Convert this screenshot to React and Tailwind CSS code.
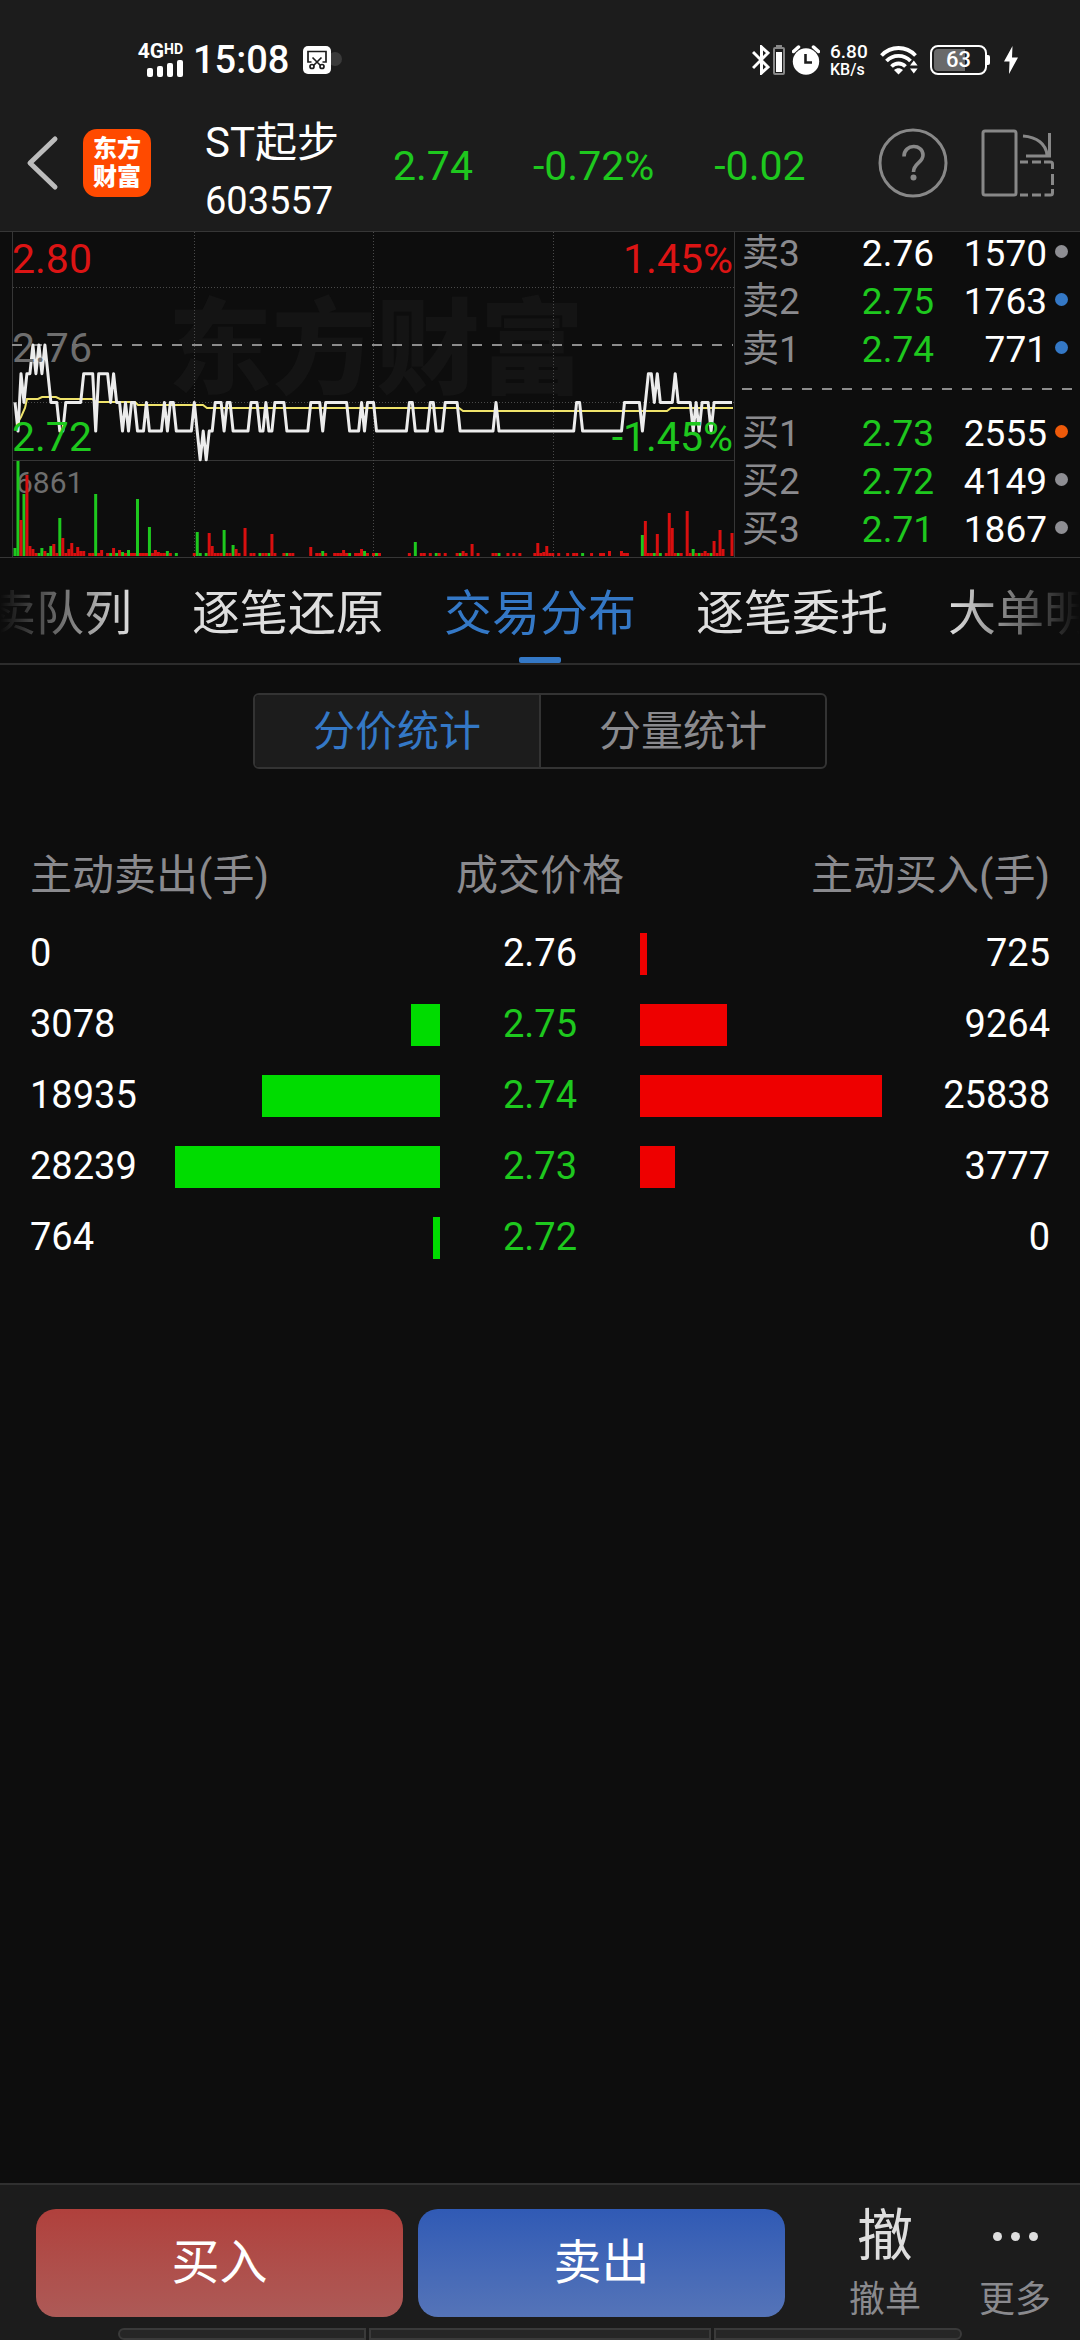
import { useState } from "react";

// [price in cents over 2.70, minutes it held]
const PRICE_RUNS = [
  [4, 1], [3, 1], [5, 1], [4, 1], [5, 2], [6, 1], [5, 1], [6, 1], [5, 1], [6, 1], [5, 1],
  [4, 3], [3, 2], [4, 6], [5, 4], [3, 1], [5, 4], [4, 1], [5, 1], [4, 2], [3, 1], [4, 1],
  [3, 1], [4, 2], [3, 3], [4, 1], [3, 5], [4, 1], [3, 1], [4, 2], [3, 6], [4, 1], [3, 1],
  [2, 1], [3, 1], [2, 1], [3, 2], [4, 3], [3, 1], [4, 2], [3, 6], [4, 3], [3, 2], [4, 1],
  [3, 2], [4, 4], [3, 8], [4, 4], [3, 1], [4, 8], [3, 4], [4, 1], [3, 1], [4, 3], [3, 11],
  [4, 2], [3, 5], [4, 2], [3, 3], [4, 5], [3, 12], [4, 1], [3, 26], [4, 2], [3, 14], [4, 6],
  [3, 1], [4, 1], [5, 2], [4, 1], [5, 1], [4, 5], [5, 1], [4, 5], [3, 1], [4, 1], [3, 1],
  [4, 3], [3, 1], [4, 7],
];

// [minute, bar height]
const VOLUME_UP = [
  [2, 36], [4, 81], [5, 10], [6, 7], [7, 3], [10, 5], [13, 12], [14, 3], [16, 18], [17, 3],
  [18, 7], [19, 13], [20, 3], [21, 9], [22, 5], [23, 5], [25, 3], [26, 3], [28, 3], [29, 6],
  [31, 3], [33, 8], [35, 6], [37, 3], [39, 3], [40, 3], [42, 3], [43, 3], [44, 3], [46, 3],
  [47, 6], [48, 4], [49, 3], [50, 3], [52, 3], [60, 3], [65, 23], [66, 10], [67, 3], [68, 3],
  [69, 3], [71, 3], [72, 3], [74, 7], [75, 3], [77, 28], [79, 3], [80, 3], [83, 3], [84, 3],
  [86, 22], [87, 3], [90, 3], [92, 3], [93, 3], [99, 9], [101, 3], [102, 3], [104, 3],
  [107, 3], [108, 3], [109, 3], [110, 6], [111, 3], [114, 3], [115, 3], [116, 7], [118, 3],
  [120, 3], [122, 3], [132, 3], [136, 3], [137, 3], [139, 3], [142, 3], [144, 3], [148, 3],
  [150, 5], [151, 3], [153, 12], [155, 3], [160, 3], [161, 3], [165, 3], [167, 3], [169, 3],
  [174, 3], [175, 13], [176, 3], [177, 4], [178, 10], [179, 3], [180, 3], [182, 3], [185, 3],
  [187, 3], [188, 3], [193, 3], [196, 3], [197, 3], [199, 5], [203, 5], [204, 3], [205, 3],
  [211, 35], [212, 3], [213, 3], [215, 22], [218, 3], [219, 43], [220, 28], [221, 3],
  [223, 3], [225, 45], [226, 3], [228, 3], [230, 3], [231, 5], [232, 3], [234, 15], [235, 3],
  [236, 26], [237, 7], [240, 23],
];
const VOLUME_DOWN = [
  [0, 8], [1, 95], [3, 62], [8, 3], [9, 8], [11, 3], [12, 10], [15, 38], [27, 62], [32, 3],
  [34, 3], [36, 4], [38, 6], [41, 57], [45, 29], [51, 5], [54, 3], [61, 24], [62, 3],
  [64, 3], [70, 26], [73, 11], [82, 3], [85, 3], [91, 3], [103, 5], [112, 3], [117, 5],
  [121, 3], [134, 14], [141, 3], [149, 3], [162, 3], [190, 3], [210, 21], [214, 3],
  [216, 3], [222, 3], [227, 7], [229, 3], [233, 3],
];

const minuteX = (i) => 15 + (i * 717) / 240;
const priceY = (cents) => 113 + (6 - cents) * 28.7;

const pricePoints = PRICE_RUNS.flatMap(([cents, n]) => Array(n).fill(cents))
  .map((cents, i) => `${minuteX(i).toFixed(1)},${priceY(cents).toFixed(1)}`)
  .join(" ");

const SELL_ORDERS = [
  { label: "卖3", price: "2.76", qty: 1570, color: "text-white", dot: "bg-[#8e8e93]" },
  { label: "卖2", price: "2.75", qty: 1763, color: "text-[#1ec81e]", dot: "bg-[#3478c6]" },
  { label: "卖1", price: "2.74", qty: 771, color: "text-[#1ec81e]", dot: "bg-[#3478c6]" },
];
const BUY_ORDERS = [
  { label: "买1", price: "2.73", qty: 2555, color: "text-[#1ec81e]", dot: "bg-[#ee5a0a]" },
  { label: "买2", price: "2.72", qty: 4149, color: "text-[#1ec81e]", dot: "bg-[#8e8e93]" },
  { label: "买3", price: "2.71", qty: 1867, color: "text-[#1ec81e]", dot: "bg-[#8e8e93]" },
];

const TABS = ["买卖队列", "逐笔还原", "交易分布", "逐笔委托", "大单明细"];

const ROWS = [
  { price: "2.76", sell: 0, buy: 725, flat: true },
  { price: "2.75", sell: 3078, buy: 9264 },
  { price: "2.74", sell: 18935, buy: 25838 },
  { price: "2.73", sell: 28239, buy: 3777 },
  { price: "2.72", sell: 764, buy: 0 },
];
const MAX_VOLUME = 28239;

function StatusBar() {
  return (
    <div className="flex h-[120px] items-center justify-between pl-[135px] pr-[62px] text-white">
      <div className="flex items-center">
        <div className="flex w-12 flex-col items-end">
          <div className="flex items-start font-bold">
            <span className="text-[21px] leading-[17px]">4G</span>
            <span className="text-[14px] leading-[12px]">HD</span>
          </div>
          <svg width="36" height="17" viewBox="0 0 36 17" fill="currentColor">
            <rect x="0" y="8" width="6" height="9" rx="2" />
            <rect x="10" y="6" width="6" height="11" rx="2" />
            <rect x="20" y="3" width="6" height="14" rx="2" />
            <rect x="30" y="0" width="6" height="17" rx="2" />
          </svg>
        </div>
        <span className="ml-2.5 text-[38px] font-medium leading-[40px]">15:08</span>
        <svg className="ml-3.5" width="40" height="28" viewBox="0 0 40 28" fill="none">
          <circle cx="32" cy="13" r="7" fill="#3a3a3a" />
          <rect width="28" height="28" rx="5" fill="#fff" />
          <g stroke="#1c1c1c" strokeWidth="1.7">
            <path d="M8.500 16H5V5.500h18V16h-3.500" />
            <path d="M9.500 11.500l8 8M18.500 11.500l-8 8" />
            <circle cx="9" cy="20.500" r="2" />
            <circle cx="19" cy="20.500" r="2" />
          </g>
        </svg>
      </div>

      <div className="flex items-center">
        <svg width="18" height="30" viewBox="0 0 18 30" fill="none" stroke="currentColor" strokeWidth="3">
          <path d="M1 7l15 15-6.500 6V2l6.500 6L1 23" />
        </svg>
        <svg className="ml-[3px]" width="12" height="30" viewBox="0 0 12 30" fill="none">
          <rect x="3" y="0" width="6" height="3" fill="#888" />
          <rect x="1" y="3" width="10" height="26" rx="1" stroke="#888" strokeWidth="2" />
          <rect x="3" y="7" width="6" height="20" fill="#fff" />
        </svg>
        <svg className="ml-[7px]" width="28" height="30" viewBox="0 0 28 30" fill="none">
          <circle cx="14" cy="16.500" r="13.200" fill="#fff" />
          <path d="M1.500 6.500L6.500 2M26.500 6.500L21.500 2" stroke="#fff" strokeWidth="3.500" strokeLinecap="round" />
          <path d="M13.500 9v8.500h6.500" stroke="#1c1c1c" strokeWidth="2.600" />
        </svg>
        <div className="ml-2.5 flex w-[38px] flex-col font-medium">
          <span className="text-[19px] leading-[18px]">6.80</span>
          <span className="text-[16px] leading-[17px]">KB/s</span>
        </div>
        <svg className="ml-3" width="38" height="30" viewBox="0 0 38 30" fill="none">
          <g stroke="#fff" strokeWidth="3.800">
            <path d="M1.500 10.500C11 0.500 26 0.500 35.500 10.500" />
            <path d="M6.500 16C13 9.200 24 9.200 30.500 16" />
            <path d="M11.500 21.500C15.500 17.500 21.500 17.500 25.500 21.500" />
          </g>
          <path d="M14 25c3-2.500 6-2.500 9 0l-4.500 4.500z" fill="#fff" />
          <path d="M30 20.500l3.800-5 3.800 5zM30 23.500l3.800 5 3.800-5z" fill="#fff" />
        </svg>
        <div className="ml-3 flex items-center">
          <div className="relative flex h-[30px] w-[57px] items-center justify-center rounded-[8px] border-2 border-white">
            <div className="absolute inset-y-0.5 left-0.5 w-[31px] rounded-l-[4px] bg-[#6a6a6a]" />
            <span className="relative text-[22px] font-medium leading-[26px]">63</span>
          </div>
          <div className="h-[10px] w-[3px] rounded-r-[2px] bg-white" />
        </div>
        <svg className="ml-3.5" width="14" height="28" viewBox="0 0 14 28" fill="currentColor">
          <path d="M8.500 0L0 15.500h5.500L5 28l9-16.500H8z" />
        </svg>
      </div>
    </div>
  );
}

function Header() {
  return (
    <div className="flex h-[111px] items-center pb-[25px] pl-[26px] pr-[25px]">
      <button aria-label="返回" className="text-[#bcbcbc]">
        <svg width="34" height="56" viewBox="0 0 34 56" fill="none" stroke="currentColor" strokeWidth="5" strokeLinecap="round" strokeLinejoin="round">
          <path d="M29 4L4 28l25 24" />
        </svg>
      </button>
      <div className="ml-[23px] flex h-[68px] w-[68px] flex-col items-center justify-center rounded-[14px] bg-[#ff4a00] text-[24px] font-black leading-[28px] text-white">
        <span>东方</span>
        <span>财富</span>
      </div>
      <div className="ml-[54px] flex flex-col pt-[18px] text-white">
        <h1 className="text-[42px] leading-[58px]">ST起步</h1>
        <span className="text-[38px] leading-[58px]">603557</span>
      </div>
      <div className="flex flex-1 items-center gap-[60px] pl-[54px] pt-1.5 text-[41px] leading-[48px] text-[#1ec81e]">
        <span>2.74</span>
        <span>-0.72%</span>
        <span>-0.02</span>
      </div>
      <button aria-label="帮助" className="text-[#888]">
        <svg width="70" height="70" viewBox="0 0 70 70" fill="none" stroke="currentColor" strokeWidth="3">
          <circle cx="35" cy="35" r="33" />
          <path d="M26 28.500c0-13 19-13 19-1.500 0 8-9.500 8-9.500 17" strokeWidth="3.600" />
          <circle cx="35.500" cy="49.500" r="3" fill="currentColor" stroke="none" />
        </svg>
      </button>
      <button aria-label="横屏" className="ml-[33px] text-[#888]">
        <svg width="74" height="68" viewBox="0 0 74 68" fill="none" stroke="currentColor" strokeWidth="3">
          <rect x="2" y="2" width="33" height="64" rx="2" />
          <path d="M42 7c14 1 23 8 24 19M68.500 4v23H45" />
          <path d="M39 33h8M51 33h9M63 33h6.500q2 0 2 2v5M71.500 45v11M71.500 60v4q0 2-2 2h-6M60 66h-9M47 66h-8" />
        </svg>
      </button>
    </div>
  );
}

function PriceChart() {
  return (
    <svg className="block min-w-0 flex-1" viewBox="0 0 736 325" fill="none">
      <text x="168" y="154" fontSize="104" fontWeight="900" fill="#141414">东方财富</text>
      <g stroke="#363636" strokeWidth="1">
        <path d="M12.500 0V325M734.500 0V325M12 228.500H734" />
        <path d="M194.500 0V325M373.500 0V325M553.500 0V325M13 55.500H734M13 170.500H734" strokeDasharray="1 2" stroke="#4a4a4a" />
      </g>
      <path d="M12 113H733" stroke="#8c8c8c" strokeWidth="2" strokeDasharray="10 10" />

      <text x="16" y="261" fontSize="30" fill="#6e6e6e">6861</text>
      {VOLUME_DOWN.map(([i, h]) => (
        <rect key={i} x={minuteX(i) - 1.5} y={324 - h} width="3" height={h} fill="#1ec81e" />
      ))}
      {VOLUME_UP.map(([i, h]) => (
        <rect key={i} x={minuteX(i) - 1.5} y={324 - h} width="3" height={h} fill="#d80f0f" />
      ))}

      <polyline
        points="18,190 21,185 25,176 27,167 38,167 42,165 56,165 60,167 92,167 97,170 135,170 138,173 203,173 207,176 459,176 463,179 667,179 671,176 733,176"
        stroke="#efe36a"
        strokeWidth="2"
      />
      <polyline points={pricePoints} stroke="#ececec" strokeWidth="3" strokeLinejoin="round" />

      <g fontSize="41">
        <text x="12" y="41" fill="#dc1414">2.80</text>
        <text x="12" y="130" fill="#6e6e6e">2.76</text>
        <text x="12" y="219" fill="#1ec81e">2.72</text>
        <text x="733" y="41" textAnchor="end" fill="#dc1414">1.45%</text>
        <text x="733" y="219" textAnchor="end" fill="#1ec81e">-1.45%</text>
      </g>
    </svg>
  );
}

function OrderRow({ label, price, qty, color, dot }) {
  return (
    <div className="flex h-12 items-center pr-3 text-[37px] leading-[48px]">
      <span className="flex-1 text-[#8a8a8e]">{label}</span>
      <span className={color}>{price}</span>
      <span className="w-[113px] text-right text-white">{qty}</span>
      <span className={`mb-1.5 ml-2 h-[13px] w-[13px] rounded-full ${dot}`} />
    </div>
  );
}

function OrderBook() {
  return (
    <div className="-mt-0.5 w-[344px] pl-1.5">
      {SELL_ORDERS.map((o) => (
        <OrderRow key={o.label} {...o} />
      ))}
      <svg className="mt-3.5 mb-5 block h-0.5 w-full">
        <path d="M0 1H330" stroke="#8c8c8c" strokeWidth="2" strokeDasharray="10 10" />
      </svg>
      {BUY_ORDERS.map((o) => (
        <OrderRow key={o.label} {...o} />
      ))}
    </div>
  );
}

function DistributionTable() {
  return (
    <table className="mt-[63px] w-full table-fixed text-[38px] text-white">
      <colgroup>
        <col className="w-[175px]" />
        <col />
        <col className="w-[200px]" />
        <col />
        <col className="w-[175px]" />
      </colgroup>
      <thead>
        <tr className="h-[86px] text-[42px] text-[#8a8a8e]">
          <th colSpan={2} className="p-0 pl-[30px] text-left font-normal">主动卖出(手)</th>
          <th className="whitespace-nowrap p-0 font-normal">成交价格</th>
          <th colSpan={2} className="p-0 pr-[30px] text-right font-normal">主动买入(手)</th>
        </tr>
      </thead>
      <tbody>
        {ROWS.map((row) => (
          <tr key={row.price} className="h-[71px]">
            <td className="p-0 pl-[30px]">{row.sell}</td>
            <td className="p-0">
              <div
                className="ml-auto h-[42px] bg-[#00dc00]"
                style={{ width: `${(row.sell / MAX_VOLUME) * 100}%` }}
              />
            </td>
            <td className={`p-0 text-center ${row.flat ? "text-white" : "text-[#1ec81e]"}`}>{row.price}</td>
            <td className="p-0">
              <div
                className="h-[42px] bg-[#ee0000]"
                style={{ width: `${(row.buy / MAX_VOLUME) * 100}%` }}
              />
            </td>
            <td className="p-0 pr-[30px] text-right">{row.buy}</td>
          </tr>
        ))}
      </tbody>
    </table>
  );
}

function TradeBar() {
  return (
    <div className="border-t-2 border-[#303030] bg-[#1c1c1c]">
      <div className="flex pl-9 pt-6">
        <button className="h-[108px] flex-1 rounded-[20px] bg-linear-to-b from-[#b0403c] to-[#ad5a57] text-[48px] text-white">
          买入
        </button>
        <button className="ml-[15px] h-[108px] flex-1 rounded-[20px] bg-linear-to-b from-[#305ab5] to-[#5574b8] text-[48px] text-white">
          卖出
        </button>
        <button className="ml-[35px] flex w-[130px] flex-col items-center text-[36px] text-[#8a8a8e]">
          <span className="text-[56px] leading-[54px] text-[#dedede]">撤</span>
          <span className="mt-3 leading-[50px]">撤单</span>
        </button>
        <button className="flex w-[130px] flex-col items-center text-[36px] text-[#8a8a8e]">
          <span className="flex h-[54px] items-center gap-[9px]">
            <span className="h-[9px] w-[9px] rounded-full bg-[#dedede]" />
            <span className="h-[9px] w-[9px] rounded-full bg-[#dedede]" />
            <span className="h-[9px] w-[9px] rounded-full bg-[#dedede]" />
          </span>
          <span className="mt-3 leading-[50px]">更多</span>
        </button>
      </div>
      <div className="mt-[3px] flex gap-[3px] px-[118px]">
        <div className="h-3 w-[248px] rounded-l-[6px] border-2 border-[#3a3a3a] bg-[#262626]" />
        <div className="h-3 flex-1 border-2 border-[#3a3a3a] bg-[#262626]" />
        <div className="h-3 w-[248px] rounded-r-[6px] border-2 border-[#3a3a3a] bg-[#262626]" />
      </div>
    </div>
  );
}

export default function App() {
  const [tab, setTab] = useState("交易分布");
  const [mode, setMode] = useState("price");

  return (
    <div className="flex min-h-screen flex-col overflow-hidden bg-[#0d0d0d] font-[Roboto,'Noto_Sans_CJK_SC',sans-serif]">
      <header className="border-b border-[#363636] bg-[#1c1c1c]">
        <StatusBar />
        <Header />
      </header>

      <section className="flex border-b border-[#363636]">
        <PriceChart />
        <OrderBook />
      </section>

      <nav className="border-b-2 border-[#2c2c2c]">
        <div className="flex justify-center gap-[60px] mask-[linear-gradient(to_right,transparent,#000_130px,#000_calc(100%-130px),transparent)]">
          {TABS.map((name) => (
            <button
              key={name}
              onClick={() => setTab(name)}
              className={`flex shrink-0 flex-col items-center pt-[21px] text-[48px] leading-[70px] ${tab === name ? "text-[#3478c6]" : "text-[#dedede]"}`}
            >
              {name}
              <span className={`mt-2 h-1.5 w-[42px] rounded-[2px] ${tab === name ? "bg-[#3478c6]" : ""}`} />
            </button>
          ))}
        </div>
      </nav>

      <main className="flex-1">
        <div className="mx-auto mt-7 flex h-[76px] w-[574px] overflow-hidden rounded-[6px] border-2 border-[#333] text-[42px]">
          <button
            onClick={() => setMode("price")}
            className={`flex-1 border-r-2 border-[#333] ${mode === "price" ? "bg-[#1c1c1c] text-[#3478c6]" : "text-[#8a8a8e]"}`}
          >
            分价统计
          </button>
          <button
            onClick={() => setMode("amount")}
            className={`flex-1 ${mode === "amount" ? "bg-[#1c1c1c] text-[#3478c6]" : "text-[#8a8a8e]"}`}
          >
            分量统计
          </button>
        </div>
        <DistributionTable />
      </main>

      <TradeBar />
    </div>
  );
}
